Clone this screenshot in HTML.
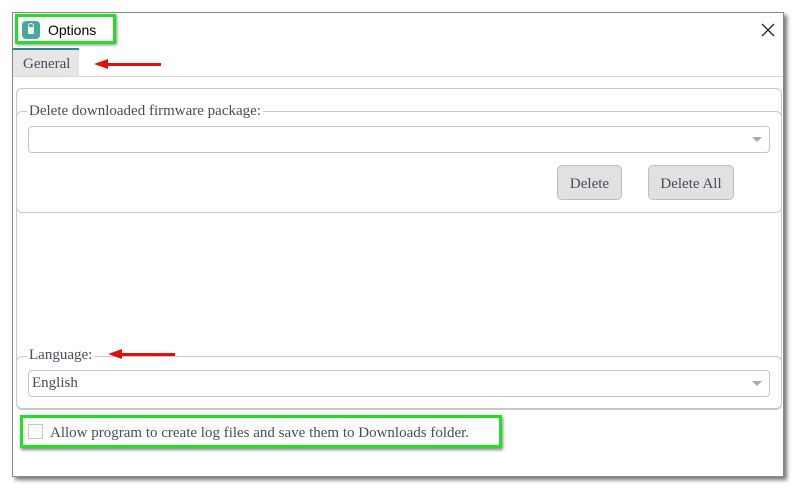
<!DOCTYPE html>
<html><head><style>
body{margin:0;width:800px;height:493px;background:#fff;position:relative;overflow:hidden;font-family:"Liberation Serif",serif;color:#4a4a5a}
.a{position:absolute;box-sizing:border-box}
.win{left:12px;top:12px;width:772px;height:465px;border:1px solid #888;background:#fff;box-shadow:3px 3px 4px #777}
.fs{border:1px solid #c8c8c8;border-radius:6px}
.lg{background:#fff;padding:0 2px;font-size:15px}
.cb{border:1px solid #c4c4c4;border-radius:4px;background:#fff}
.arr{width:0;height:0;border-left:5px solid transparent;border-right:5px solid transparent;border-top:5px solid #aaa}
.btn{background:#e1e1e1;border:1px solid #bdbdbd;border-radius:5px;font-size:15px;text-align:center;line-height:36px}
.red{height:3px;background:#e01010}
.rh{width:0;height:0;border-top:5px solid transparent;border-bottom:5px solid transparent;border-right:14px solid #e01010}
</style></head><body>
<div class="a win"></div>
<div class="a" style="left:15px;top:14px;width:101px;height:30px;border:3px solid #22e022;box-shadow:1px 1px 3px #888"></div>
<div class="a" style="left:22px;top:21px;width:18px;height:18px;background:#4aa89a;border-radius:4px"></div>
<div class="a" style="left:28px;top:27px;width:6px;height:7px;background:#e8f4f0;border-radius:1px"></div>
<div class="a" style="left:28px;top:23px;width:6px;height:6px;border:1.5px solid #e8f4f0;border-bottom:none;border-radius:3px 3px 0 0"></div>
<div class="a" style="left:48px;top:22px;font-family:'Liberation Sans',sans-serif;font-size:14px;color:#000">Options</div>
<svg class="a" style="left:761px;top:23px" width="14" height="14"><path d="M1 1L13 13M13 1L1 13" stroke="#222" stroke-width="1.3"/></svg>
<div class="a" style="left:13px;top:48px;width:66px;height:28px;background:#e6e6e6;border-top:2px solid #2b8a8a"></div>
<div class="a" style="left:23px;top:56px;font-size:15px">General</div>
<div class="a" style="left:13px;top:76px;width:770px;height:1px;background:#d8d8d8"></div>
<div class="a rh" style="left:94px;top:59px"></div><div class="a red" style="left:106px;top:63px;width:55px"></div>
<div class="a fs" style="left:16px;top:88px;width:766px;height:322px"></div>
<div class="a fs" style="left:16px;top:111px;width:766px;height:102px"></div>
<div class="a lg" style="left:27px;top:103px">Delete downloaded firmware package:</div>
<div class="a cb" style="left:28px;top:126px;width:742px;height:27px"></div>
<div class="a arr" style="left:752px;top:137px"></div>
<div class="a btn" style="left:557px;top:165px;width:65px;height:35px">Delete</div>
<div class="a btn" style="left:648px;top:165px;width:86px;height:35px">Delete All</div>
<div class="a" style="left:17px;top:213px;width:764px;height:150px;background:#fff"></div>
<div class="a fs" style="left:16px;top:356px;width:766px;height:53px"></div>
<div class="a lg" style="left:27px;top:347px">Language:</div>
<div class="a rh" style="left:108px;top:349px"></div><div class="a red" style="left:120px;top:353px;width:55px"></div>
<div class="a cb" style="left:28px;top:370px;width:742px;height:27px"></div>
<div class="a" style="left:32px;top:375px;font-size:15px">English</div>
<div class="a arr" style="left:752px;top:381px"></div>
<div class="a" style="left:20px;top:415px;width:482px;height:33px;border:3px solid #22e022;box-shadow:1px 2px 3px #888"></div>
<div class="a" style="left:28px;top:424px;width:15px;height:15px;border:1px solid #c8c8c8"></div>
<div class="a" style="left:50px;top:425px;font-size:15px">Allow program to create log files and save them to Downloads folder.</div>
</body></html>
